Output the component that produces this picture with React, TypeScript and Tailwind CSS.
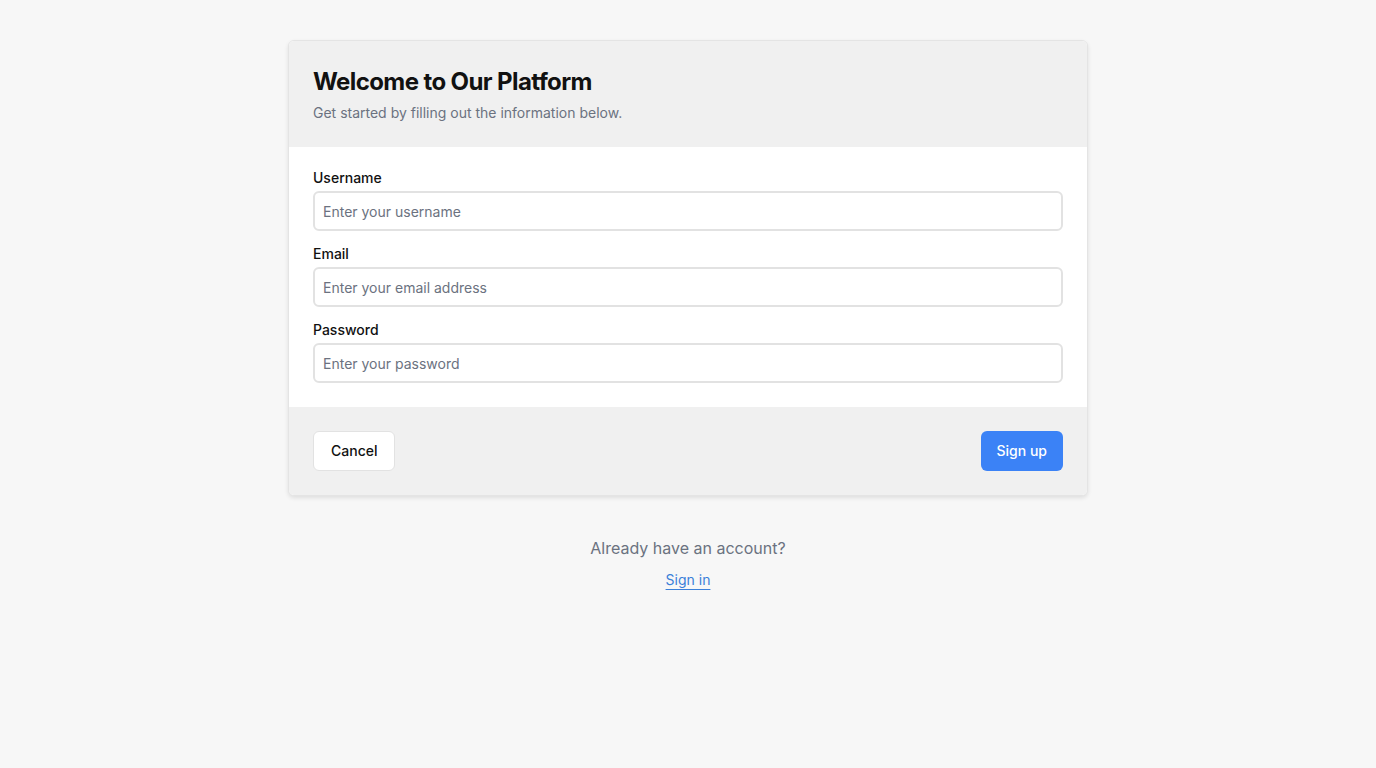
export default function App() {
  const fields = [
    { label: "Username", type: "text", placeholder: "Enter your username" },
    { label: "Email", type: "email", placeholder: "Enter your email address" },
    { label: "Password", type: "password", placeholder: "Enter your password" },
  ];

  return (
    <div className="min-h-screen bg-[#f7f7f7] pt-10 font-['Inter','Liberation_Sans',sans-serif]">
      <div className="mx-auto w-[800px] overflow-hidden rounded-md border border-[#e4e4e4] bg-white shadow-[0_2px_4px_rgba(0,0,0,0.1)]">
        <div className="bg-[#f0f0f0] px-6 pt-[25px] pb-6">
          <h1 className="text-2xl leading-8 font-bold tracking-tight text-[#111]">Welcome to Our Platform</h1>
          <p className="mt-[5px] text-sm leading-5 text-[#6b7280]">
            Get started by filling out the information below.
          </p>
        </div>

        <div className="flex flex-col gap-3 bg-white px-6 pt-5 pb-6">
          {fields.map((field) => (
            <div key={field.label} className="flex flex-col gap-[3px]">
              <label className="pt-px text-sm leading-5 font-medium text-[#111]">{field.label}</label>
              <input
                type={field.type}
                placeholder={field.placeholder}
                className="h-10 w-full rounded-md border-2 border-[#e2e2e2] bg-white px-2 text-sm text-[#111] placeholder:text-[#6b7280] outline-none"
              />
            </div>
          ))}
        </div>

        <div className="flex items-center justify-between bg-[#f0f0f0] px-6 py-6">
          <button className="h-10 rounded-md border border-[#e2e2e2] bg-white px-[17px] text-sm font-medium text-[#111]">
            Cancel
          </button>
          <button className="h-10 rounded-md bg-[#3b82f6] px-4 text-sm font-medium text-white">
            Sign up
          </button>
        </div>
      </div>

      <div className="mt-10 flex flex-col items-center gap-2.5">
        <p className="text-base leading-6 text-[#6b7280]">Already have an account?</p>
        <a href="#" className="text-sm leading-5 text-[#3b7fd9] underline underline-offset-4">
          Sign in
        </a>
      </div>
    </div>
  );
}
